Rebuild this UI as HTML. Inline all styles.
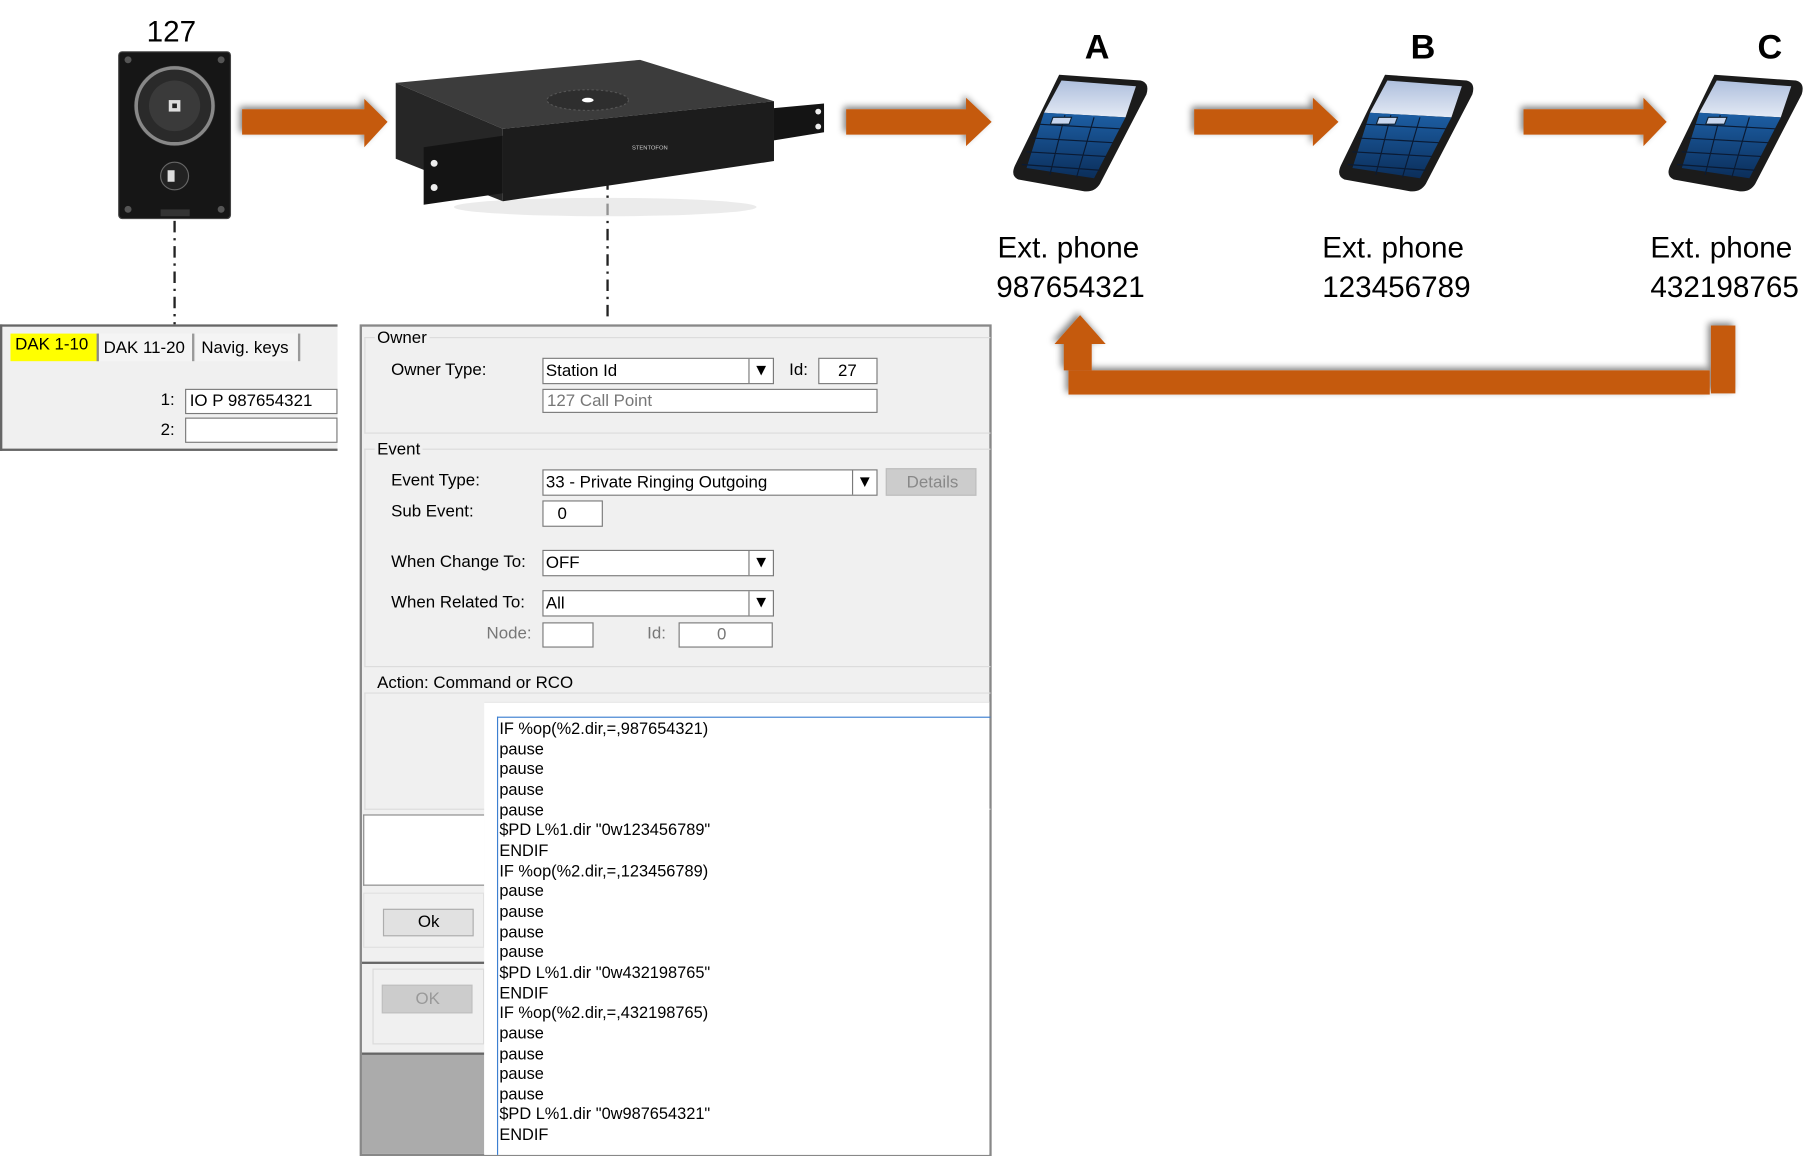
<!DOCTYPE html>
<html><head><meta charset="utf-8">
<style>
html,body{margin:0;padding:0;background:#fff;overflow:hidden;width:1804px;height:1156px}
#s{position:absolute;left:0;top:0;width:1550px;height:1005px;transform-origin:0 0;transform:scale(1.1639,1.1503)}
.a{position:absolute}
.t{position:absolute;white-space:nowrap;font-family:"Liberation Sans",sans-serif;font-size:14.5px;color:#000;transform:scaleX(1);transform-origin:0 0;line-height:16px}
.big{position:absolute;white-space:nowrap;font-family:"Liberation Sans",sans-serif;font-size:26px;color:#000;transform:scaleX(.98);transform-origin:0 0}
.box{position:absolute;background:#fff;border:1px solid #7a7a7a;box-sizing:border-box}
.dd{position:absolute;right:0;top:0;bottom:0;width:20px;border-left:1px solid #7a7a7a;font-size:11px;text-align:center;line-height:20px;font-family:"DejaVu Sans",sans-serif}
.grp{position:absolute;border-top:1px solid #dcdcdc}
.code{position:absolute;left:429px;top:626px;font-family:"Liberation Sans",sans-serif;font-size:14.5px;line-height:17.65px;transform:scaleX(.97);transform-origin:0 0;white-space:pre}
</style></head><body>
<div id="s">
<svg class="a" style="left:0;top:0" width="1550" height="400">
<defs><filter id="sh" x="-10%" y="-30%" width="130%" height="170%"><feGaussianBlur in="SourceAlpha" stdDeviation="3"/><feOffset dx="-2" dy="-2"/><feComponentTransfer><feFuncA type="linear" slope=".5"/></feComponentTransfer><feMerge><feMergeNode/><feMergeNode in="SourceGraphic"/></feMerge></filter></defs>
<g fill="#C55A11" filter="url(#sh)">
<polygon points="208,95 313,95 313,86 333,106 313,128 313,117 208,117"/>
<polygon points="727,95 830,95 830,85 852,106 830,127 830,117 727,117"/>
<polygon points="1026,95 1128,95 1128,85 1150,106 1128,127 1128,117 1026,117"/>
<polygon points="1309,95 1412,95 1412,85 1432,106 1412,127 1412,117 1309,117"/>
<rect x="1470" y="283" width="21" height="59"/>
<rect x="918" y="322" width="551" height="21"/>
<polygon points="914,322 914,299 906,299 928,274 950,299 938,299 938,322"/>
</g>
<line x1="150" y1="192" x2="150" y2="282" stroke="#222" stroke-width="2" stroke-dasharray="10,5,2,5"/>
<line x1="522" y1="155" x2="522" y2="280" stroke="#222" stroke-width="2" stroke-dasharray="10,5,2,5"/>
<rect x="102" y="45" width="96" height="145" rx="3" fill="#161616" stroke="#444"/>
<circle cx="150" cy="92" r="35" fill="#2a2a2a"/>
<circle cx="150" cy="92" r="33" fill="none" stroke="#888" stroke-width="3"/>
<circle cx="150" cy="92" r="22" fill="#3a3a3a"/>
<rect x="145" y="87" width="10" height="10" fill="#ddd"/><rect x="148" y="90" width="4" height="4" fill="#222"/>
<circle cx="150" cy="153" r="12" fill="#222" stroke="#666"/>
<path d="M144 148 l6 0 0 10 -6 0z" fill="#ddd"/>
<circle cx="110" cy="52" r="3" fill="#555"/><circle cx="190" cy="52" r="3" fill="#555"/>
<circle cx="110" cy="182" r="3" fill="#555"/><circle cx="190" cy="182" r="3" fill="#555"/>
<rect x="138" y="182" width="25" height="6" fill="#333"/>
<ellipse cx="520" cy="180" rx="130" ry="8" fill="#ddd" opacity=".6"/>
<polygon points="340,72 550,52 665,88 432,112" fill="#3c3c3c"/>
<polygon points="340,72 432,112 432,175 340,138" fill="#262626"/>
<polygon points="432,112 665,88 665,140 432,175" fill="#1c1c1c"/>
<polygon points="364,128 432,118 432,168 364,178" fill="#141414"/>
<polygon points="665,94 708,90 708,115 665,122" fill="#141414"/>
<circle cx="373" cy="142" r="3" fill="#eee"/><circle cx="373" cy="163" r="3" fill="#eee"/>
<circle cx="703" cy="97" r="2.5" fill="#eee"/><circle cx="703" cy="110" r="2.5" fill="#eee"/>
<ellipse cx="505" cy="87" rx="35" ry="9" fill="#2e2e2e" stroke="#555" stroke-dasharray="2,2"/>
<ellipse cx="505" cy="87" rx="5" ry="2" fill="#fff"/>
<text x="543" y="130" font-family="Liberation Sans" font-size="5" fill="#ccc">STENTOFON</text>
</svg>
<div class="big" style="left:126px;top:12px">127</div>
<div class="big" style="left:932px;top:25px;font-weight:bold;font-size:30px">A</div>
<div class="big" style="left:1212px;top:25px;font-weight:bold;font-size:30px">B</div>
<div class="big" style="left:1510px;top:25px;font-weight:bold;font-size:30px">C</div>
<svg class="a" style="left:0;top:0" width="1550" height="200">
<defs><linearGradient id="sc" x1="0" y1="0" x2="0" y2="1"><stop offset="0" stop-color="#aebfdd"/><stop offset="1" stop-color="#e4eaf5"/></linearGradient>
<linearGradient id="kp" x1="0" y1="0" x2="0" y2="1"><stop offset="0" stop-color="#1d5fa5"/><stop offset="1" stop-color="#0b2e5a"/></linearGradient>
<g id="ph"><path d="M40 5 L110 10 Q118 12 115 22 L75 100 Q70 108 60 106 L5 96 Q-2 93 2 84 Z" fill="#1b1b1b"/>
<path d="M42 10 L106 15 L97 42 L27 38 Z" fill="url(#sc)"/>
<path d="M27 38 L97 42 L70 95 L12 86 Z" fill="url(#kp)"/>
<g stroke="#0a1a33" stroke-width="1" fill="none"><path d="M22 48 L92 52 M17 60 L86 64 M12 72 L80 76 M8 83 L75 88 M45 40 L32 92 M70 42 L55 94"/></g>
<rect x="50" y="42" width="16" height="6" fill="#c8d6ee" stroke="#123" transform="skewX(-20)"/></g></defs>
<use href="#ph" x="870" y="60"/><use href="#ph" x="1150" y="60"/><use href="#ph" x="1433" y="60"/>
</svg>
<div class="big" style="left:857px;top:200px">Ext. phone</div>
<div class="big" style="left:856px;top:234px">987654321</div>
<div class="big" style="left:1136px;top:200px">Ext. phone</div>
<div class="big" style="left:1136px;top:234px">123456789</div>
<div class="big" style="left:1418px;top:200px">Ext. phone</div>
<div class="big" style="left:1418px;top:234px">432198765</div>

<div class="a" style="left:0;top:282px;width:290px;height:110px;background:#f0f0f0;border:2px solid #666;border-right:none;box-sizing:border-box"></div>
<div class="a" style="left:9px;top:290px;width:74px;height:24px;background:#ffff00;border-right:2px solid #888"></div>
<div class="a" style="left:85px;top:290px;width:80px;height:24px;background:#f4f4f4;border-right:2px solid #999"></div>
<div class="a" style="left:168px;top:290px;width:88px;height:24px;background:#f4f4f4;border-right:2px solid #999"></div>
<div class="t" style="left:13px;top:292px">DAK 1-10</div>
<div class="t" style="left:89px;top:295px">DAK 11-20</div>
<div class="t" style="left:173px;top:295px">Navig. keys</div>
<div class="t" style="left:138px;top:340px">1:</div>
<div class="t" style="left:138px;top:366px">2:</div>
<div class="box" style="left:159px;top:338px;width:131px;height:22px"></div>
<div class="t" style="left:163px;top:341px">IO P 987654321</div>
<div class="box" style="left:159px;top:363px;width:131px;height:22px"></div>

<div class="a" style="left:309px;top:282px;width:543px;height:723px;background:#f0f0f0;border:2px solid #888;box-sizing:border-box"></div>
<div class="grp" style="left:313px;top:293px;width:537px;height:82px;border-left:1px solid #dcdcdc;border-bottom:1px solid #dcdcdc"></div>
<div class="t" style="left:322px;top:286px;background:#f0f0f0;padding:0 2px">Owner</div>
<div class="t" style="left:336px;top:314px">Owner Type:</div>
<div class="box" style="left:466px;top:311px;width:199px;height:23px"><div class="dd">▼</div></div>
<div class="t" style="left:469px;top:315px">Station Id</div>
<div class="t" style="left:678px;top:314px">Id:</div>
<div class="box" style="left:703px;top:311px;width:51px;height:23px"></div>
<div class="t" style="left:720px;top:315px">27</div>
<div class="box" style="left:466px;top:338px;width:288px;height:21px"></div>
<div class="t" style="left:470px;top:341px;color:#777">127 Call Point</div>

<div class="grp" style="left:313px;top:390px;width:537px;height:188px;border-left:1px solid #dcdcdc;border-bottom:1px solid #dcdcdc"></div>
<div class="t" style="left:322px;top:383px;background:#f0f0f0;padding:0 2px">Event</div>
<div class="t" style="left:336px;top:410px">Event Type:</div>
<div class="box" style="left:466px;top:408px;width:288px;height:23px"><div class="dd">▼</div></div>
<div class="t" style="left:469px;top:412px">33 - Private Ringing Outgoing</div>
<div class="a" style="left:761px;top:407px;width:78px;height:24px;background:#cccccc;border:1px solid #bdbdbd;box-sizing:border-box"></div>
<div class="t" style="left:779px;top:412px;color:#888">Details</div>
<div class="t" style="left:336px;top:437px">Sub Event:</div>
<div class="box" style="left:466px;top:435px;width:52px;height:23px"></div>
<div class="t" style="left:479px;top:439px">0</div>
<div class="t" style="left:336px;top:481px">When Change To:</div>
<div class="box" style="left:466px;top:478px;width:199px;height:23px"><div class="dd">▼</div></div>
<div class="t" style="left:469px;top:482px">OFF</div>
<div class="t" style="left:336px;top:516px">When Related To:</div>
<div class="box" style="left:466px;top:513px;width:199px;height:23px"><div class="dd">▼</div></div>
<div class="t" style="left:469px;top:517px">All</div>
<div class="t" style="left:418px;top:543px;color:#777">Node:</div>
<div class="box" style="left:466px;top:541px;width:44px;height:22px"></div>
<div class="t" style="left:556px;top:543px;color:#777">Id:</div>
<div class="box" style="left:583px;top:541px;width:81px;height:22px"></div>
<div class="t" style="left:616px;top:544px;color:#777">0</div>

<div class="grp" style="left:313px;top:602px;width:537px;height:100px;border-left:1px solid #dcdcdc;border-bottom:1px solid #dcdcdc"></div>
<div class="t" style="left:322px;top:586px;background:#f0f0f0;padding:0 2px">Action: Command or RCO</div>
<div class="a" style="left:312px;top:708px;width:104px;height:62px;background:#fff;border:1px solid #888;border-right:none;box-sizing:border-box"></div>
<div class="a" style="left:312px;top:776px;width:104px;height:48px;border:1px solid #e0e0e0;box-sizing:border-box"></div>
<div class="a" style="left:329px;top:790px;width:78px;height:24px;background:#e1e1e1;border:1px solid #adadad;box-sizing:border-box"></div>
<div class="t" style="left:359px;top:794px">Ok</div>
<div class="a" style="left:311px;top:836px;width:105px;height:2px;background:#666"></div>
<div class="a" style="left:320px;top:842px;width:96px;height:66px;border:1px solid #dadada;box-sizing:border-box"></div>
<div class="a" style="left:328px;top:856px;width:78px;height:25px;background:#cccccc;border:1px solid #bfbfbf;box-sizing:border-box"></div>
<div class="t" style="left:357px;top:861px;color:#999">OK</div>
<div class="a" style="left:311px;top:915px;width:105px;height:88px;background:#ababab;border-top:2px solid #666;box-sizing:border-box"></div>
<div class="a" style="left:416px;top:610px;width:434px;height:393px;background:#fff;border-top:1px solid #e6e6e6"></div>
<div class="a" style="left:427px;top:623px;width:423px;height:380px;border-left:1px solid #3c7fd1;border-top:1px solid #3c7fd1"></div>
<div class="code">IF %op(%2.dir,=,987654321)
pause
pause
pause
pause
$PD L%1.dir "0w123456789"
ENDIF
IF %op(%2.dir,=,123456789)
pause
pause
pause
pause
$PD L%1.dir "0w432198765"
ENDIF
IF %op(%2.dir,=,432198765)
pause
pause
pause
pause
$PD L%1.dir "0w987654321"
ENDIF</div>
</div>
</body></html>
